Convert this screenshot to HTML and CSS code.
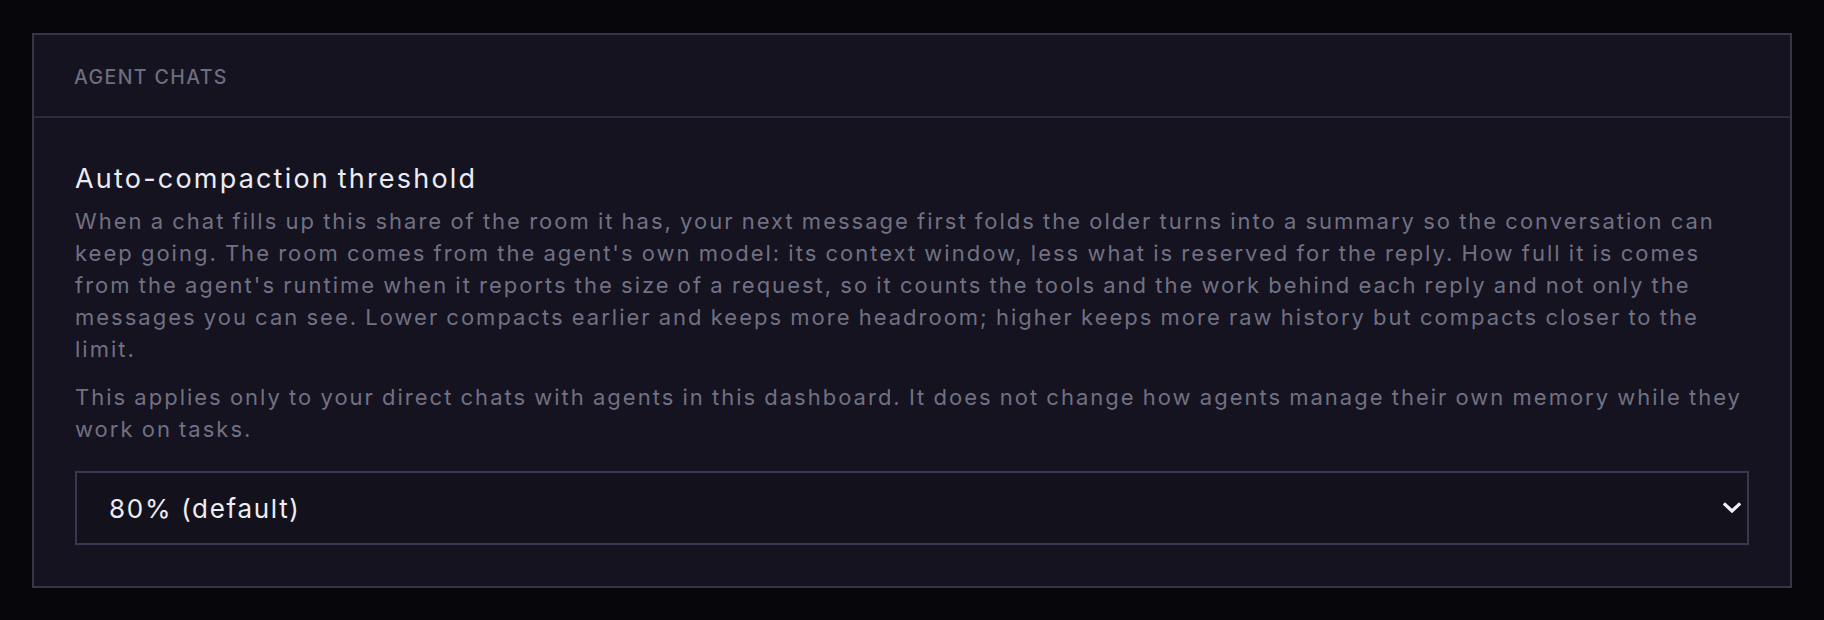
FILE: index.html
```html
<!DOCTYPE html>
<html lang="en">
<head>
    <meta charset="UTF-8">
    <title>Agent chats settings</title>
    <link rel="stylesheet" href="styles.css">
</head>
<body>
    <section class="panel">
        <div class="panel-header">Agent chats</div>

        <div class="panel-body">
            <label class="field-title" for="threshold">Auto-compaction threshold</label>
            <p class="field-help">
                When a chat fills up this share of the room it has, your next message first folds the older turns into a summary so the conversation can keep going. The room comes from the agent's own model: its context window, less what is reserved for the reply. How full it is comes from the agent's runtime when it reports the size of a request, so it counts the tools and the work behind each reply and not only the messages you can see. Lower compacts earlier and keeps more headroom; higher keeps more raw history but compacts closer to the limit.
            </p>
            <p class="field-help">
                This applies only to your direct chats with agents in this dashboard. It does not change how agents manage their own memory while they work on tasks.
            </p>

            <div class="select-wrap">
                <select id="threshold" name="threshold">
                    <option value="50">50%</option>
                    <option value="60">60%</option>
                    <option value="70">70%</option>
                    <option value="80" selected>80% (default)</option>
                    <option value="90">90%</option>
                </select>
                <svg class="select-arrow" width="18" height="12" viewBox="0 0 18 12" aria-hidden="true">
                    <path d="M2 2.5 L9 9 L16 2.5" fill="none" stroke="#f2f1f6" stroke-width="3.2" stroke-linecap="square"/>
                </svg>
            </div>
        </div>
    </section>
</body>
</html>
```

FILE: styles.css
```css
body {
    margin: 0;
    padding: 33px 32px 32px;
    background: #07060b;
    font-family: Inter, "Noto Sans", sans-serif;
}
.panel {
    background: #14131f;
    border: 2px solid #363446;
}
.panel-header {
    padding: 28px 40px 24px;
    line-height: 29px;
    font-size: 19.5px;
    font-weight: 500;
    letter-spacing: 1.4px;
    text-transform: uppercase;
    color: #6e6c7e;
    border-bottom: 2px solid #2c2a3b;
}
.panel-body {
    padding: 43px 41px 41px;
}
.field-title {
    display: block;
    font-size: 27px;
    line-height: 36px;
    letter-spacing: 2.2px;
    word-spacing: -2px;
    color: #ecebf2;
    margin-bottom: 8px;
}
.field-help {
    margin: 0 0 16px;
    font-size: 22px;
    line-height: 32px;
    letter-spacing: 2px;
    word-spacing: -1px;
    color: #727083;
}
.select-wrap {
    position: relative;
    margin-top: 26px;
}
select {
    width: 100%;
    height: 74px;
    padding: 0 60px 0 32px;
    appearance: none;
    -webkit-appearance: none;
    background: #13121c;
    border: 2px solid #3a3850;
    border-radius: 0;
    color: #eeedf3;
    font-family: Inter, "Noto Sans", sans-serif;
    font-size: 26px;
    letter-spacing: 1.7px;
    outline: none;
}
.select-arrow {
    position: absolute;
    right: 8px;
    top: 31px;
    pointer-events: none;
}
```
